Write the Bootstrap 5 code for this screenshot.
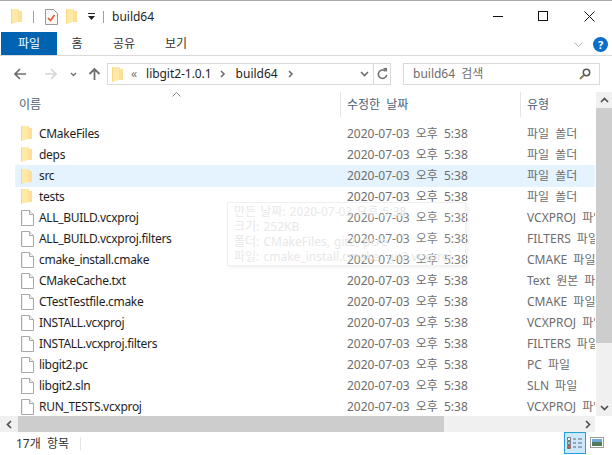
<!doctype html>
<html lang="ko">
  <head>
    <meta charset="UTF-8" />
    <title>build64</title>
    <link href="https://cdn.jsdelivr.net/npm/bootstrap@5.3.0/dist/css/bootstrap.min.css" rel="stylesheet" />
    <style>
      html, body { width: 612px; height: 455px; overflow: hidden; background: #fff; }
      body { font-family: "Noto Sans", "Noto Sans CJK KR", sans-serif; font-size: 12px; color: #1e1e1e; line-height: 1; word-spacing: 3px; }
      .win { position: relative; width: 612px; height: 455px; border-top: 1px solid #a9a9a9; }
      .title-bar { height: 31px; padding-left: 11px; }
      .ttl-folder { margin-left: 11px; }
      .ttl-sep { width: 1px; height: 12px; background: #a0a0a0; }
      .win-ctl { position: absolute; top: 10px; }
      .ribbon { height: 24px; border-bottom: 1px solid #dadada; padding-left: 1px; }
      .rb-tab { height: 23px; text-align: center; line-height: 23px; color: #333; }
      .rb-w56 { width: 56px; }
      .rb-w40 { width: 40px; }
      .rb-w54 { width: 54px; }
      .rb-w50 { width: 50px; }
      .rb-tab.on { background: #0063b1; color: #fff; }
      .rb-end { margin-left: auto; margin-top: 5px; padding-right: 4px; gap: 10px; }
      .help { width: 15px; height: 15px; border-radius: 50%; background: #0a6fc9; color: #fff; font-weight: 700; font-size: 11px; line-height: 15px; text-align: center; }
      .addr-row { height: 36px; padding: 7px 12px 0 0; }
      .nav-btns { width: 107px; padding-left: 14px; }
      .nav-fwd { margin-left: 17px; }
      .nav-drop { margin-left: 13px; }
      .nav-up { margin-left: 11px; }
      .addr { width: 284px; height: 22px; border: 1px solid #d9d9d9; padding-left: 4px; }
      .crumb-1 { margin-left: 9px; letter-spacing: -.05px; }
      .crumb-2 { margin: 0 10px 0 10px; }
      .refresh { width: 17px; height: 20px; border-left: 1px solid #d9d9d9; }
      .search { width: 197px; height: 22px; margin-left: 12px; border: 1px solid #d9d9d9; padding: 0 8px 0 9px; color: #6d6d6d; }
      .main { height: 324px; }
      .list-pane { width: 596px; height: 324px; overflow: hidden; position: relative; }
      .head { height: 25px; position: relative; color: #4c607a; }
      .h-name { width: 340px; padding-left: 19px; }
      .h-date { width: 180px; padding-left: 6px; border-left: 1px solid #e5e5e5; height: 25px; line-height: 25px; }
      .h-type { padding-left: 6px; border-left: 1px solid #e5e5e5; height: 25px; line-height: 25px; }
      .sort-up { position: absolute; left: 172px; top: 0; }
      .rows { padding-top: 6px; }
      .f-row { height: 21px; margin-left: 15px; width: 580px; overflow: hidden; white-space: nowrap; }
      .f-row.sel { background: #e5f3ff; height: 22px; margin-bottom: -1px; }
      .c-name { width: 325px; padding-left: 6px; }
      .c-icon { width: 18px; flex: none; }
      .c-label { letter-spacing: -.3px; }
      .c-date { width: 180px; padding-left: 7px; color: #6d6d6d; }
      .c-type { width: 75px; padding-left: 7px; color: #6d6d6d; overflow: hidden; }
      .tip { position: absolute; left: 227px; top: 110px; width: 239px; height: 64px; padding: 1px 6px; background: rgba(255,255,255,.12); border: 1px solid #efefef; box-shadow: 2px 2px 3px rgba(0,0,0,.05); color: #e8e8e8; line-height: 15px; white-space: nowrap; overflow: hidden; word-spacing: 1px; }
      .vbar { width: 16px; height: 324px; background: #f0f0f0; }
      .sb-btn { height: 16px; }
      .vthumb { height: 235px; background: #cdcdcd; }
      .hbar { height: 16px; width: 595px; background: #f0f0f0; }
      .hbar-arrow { width: 18px; }
      .hthumb { width: 426px; height: 16px; background: #cdcdcd; }
      .status { height: 23px; padding-left: 16px; position: relative; color: #333; }
      .st-sep { width: 1px; height: 13px; background: #e5e5e5; margin-left: 11px; }
      .view-a { position: absolute; left: 564px; top: 0; width: 22px; height: 22px; background: #cce8ff; border: 1px solid #26a0da; }
      .view-b { position: absolute; left: 590px; top: 5px; }
    </style>
  </head>
  <body>
    <svg width="0" height="0" class="position-absolute">
      <defs>
        <symbol id="folder" viewBox="0 0 11 15">
          <path d="M0 0h7l1 2h3v11H8z" fill="#f3cf6c" />
          <path d="M0 0h7v13l-7 2z" fill="#ffe9a6" />
          <path d="M0 0v15" stroke="#f0c95e" />
          <path d="M7 2h4v11H7z" fill="#fce09a" />
        </symbol>
        <symbol id="file" viewBox="0 0 13 16">
          <path d="M.5.5h8l4 4v11H.5z" fill="#fff" stroke="#a8a8a8" />
          <path d="M8.500.5v4h4" fill="#f2f2f2" stroke="#a8a8a8" />
          <path d="M1.500 1.500v13" stroke="#ececec" />
        </symbol>
        <symbol id="chev-r" viewBox="0 0 6 8">
          <path d="M1 1l3 3-3 3" fill="none" stroke="#6d6d6d" stroke-width="1.6" />
        </symbol>
      </defs>
    </svg>

    <div class="win d-flex flex-column">
      <div class="title-bar d-flex align-items-center">
        <svg width="11" height="15"><use href="#folder" /></svg>
        <span class="ttl-sep ttl-folder"></span>
        <svg class="ttl-folder" width="13" height="16" viewBox="0 0 13 16">
          <path d="M.5.5h8l4 4v11H.5z" fill="#f7f7f7" stroke="#9a9a9a" />
          <path d="M3 9l2.500 2.500L9.500 6" fill="none" stroke="#e2582a" stroke-width="1.6" />
        </svg>
        <svg class="ms-2" width="11" height="15"><use href="#folder" /></svg>
        <svg class="ttl-folder" width="7" height="8" viewBox="0 0 7 8">
          <path d="M0 .5h7" stroke="#222" />
          <path d="M0 3h7L3.500 7z" fill="#222" />
        </svg>
        <span class="ttl-sep ms-2"></span>
        <span class="ms-2">build64</span>
      </div>
      <svg class="win-ctl" style="left: 493px" width="11" height="11"><path d="M0 5.500h10" stroke="#111" /></svg>
      <svg class="win-ctl" style="left: 538px" width="11" height="11"><rect x=".5" y=".5" width="9" height="9" fill="none" stroke="#111" /></svg>
      <svg class="win-ctl" style="left: 584px" width="11" height="11"><path d="M.5.5l10 10M10.500.5l-10 10" stroke="#111" /></svg>

      <div class="ribbon d-flex align-items-start">
        <div class="rb-tab rb-w56 on">파일</div>
        <div class="rb-tab rb-w40">홈</div>
        <div class="rb-tab rb-w54">공유</div>
        <div class="rb-tab rb-w50">보기</div>
        <div class="rb-end d-flex align-items-center">
          <svg width="9" height="6" viewBox="0 0 9 6"><path d="M.5.500l4 4 4-4" fill="none" stroke="#b5b5b5" /></svg>
          <span class="help">?</span>
        </div>
      </div>

      <div class="addr-row d-flex align-items-start">
        <div class="nav-btns d-flex align-items-center">
          <svg width="13" height="22" viewBox="0 0 13 22"><path d="M12 11H2M6 6l-5 5 5 5" fill="none" stroke="#6d6d6d" stroke-width="1.7" /></svg>
          <svg class="nav-fwd" width="13" height="22" viewBox="0 0 13 22"><path d="M1 11h10M7 6l5 5-5 5" fill="none" stroke="#d6d6d6" stroke-width="1.7" /></svg>
          <svg class="nav-drop" width="7" height="22" viewBox="0 0 7 22"><path d="M1 10l2.500 2.500L6 10" fill="none" stroke="#6d6d6d" stroke-width="1.3" /></svg>
          <svg class="nav-up" width="13" height="22" viewBox="0 0 13 22"><path d="M6.500 17V6M1.500 11l5-5 5 5" fill="none" stroke="#6d6d6d" stroke-width="1.8" /></svg>
        </div>
        <div class="addr d-flex align-items-center">
          <svg width="11" height="15"><use href="#folder" /></svg>
          <span class="ms-2 text-secondary">«</span>
          <span class="crumb-1">libgit2-1.0.1</span>
          <svg class="ms-2" width="6" height="8"><use href="#chev-r" /></svg>
          <span class="crumb-2">build64</span>
          <svg width="6" height="8"><use href="#chev-r" /></svg>
          <svg class="ms-auto me-1" width="9" height="6" viewBox="0 0 9 6"><path d="M1 1l3.500 3.500L8 1" fill="none" stroke="#6d6d6d" stroke-width="1.6" /></svg>
          <div class="refresh d-flex align-items-center justify-content-center">
            <svg width="11" height="12" viewBox="0 0 11 12"><path d="M8.500 3.200A4.200 4.200 0 1 0 9.700 7" fill="none" stroke="#6d6d6d" stroke-width="1.5" /><path d="M6 0l4 0v4z" fill="#6d6d6d" /></svg>
          </div>
        </div>
        <div class="search d-flex align-items-center justify-content-between">
          <span>build64 검색</span>
          <svg width="12" height="12" viewBox="0 0 12 12"><circle cx="7.500" cy="4.500" r="3.200" fill="none" stroke="#555" stroke-width="1.500" /><path d="M5 7l-4 4" stroke="#8a7a55" stroke-width="2" /></svg>
        </div>
      </div>

      <div class="main d-flex">
        <div class="list-pane">
          <div class="head d-flex align-items-center">
            <svg class="sort-up" width="9" height="6" viewBox="0 0 9 6"><path d="M.5 4.500l4-4 4 4" fill="none" stroke="#8a8a8a" /></svg>
            <div class="h-name">이름</div>
            <div class="h-date">수정한 날짜</div>
            <div class="h-type">유형</div>
          </div>
          <div class="rows" id="rows"></div>
          <div class="tip">
            <div>만든 날짜: 2020-07-03 오후 5:38</div>
            <div>크기: 252KB</div>
            <div>폴더: CMakeFiles, git2, pcre</div>
            <div>파일: cmake_install.cmake, git2.vcxproj</div>
          </div>
        </div>
        <div class="vbar d-flex flex-column">
          <div class="sb-btn d-flex align-items-center justify-content-center">
            <svg width="9" height="6" viewBox="0 0 9 6"><path d="M1 5l3.500-3.500L8 5" fill="none" stroke="#505050" stroke-width="1.700" /></svg>
          </div>
          <div class="vthumb"></div>
          <div class="sb-btn d-flex align-items-center justify-content-center mt-auto">
            <svg width="9" height="6" viewBox="0 0 9 6"><path d="M1 1l3.500 3.500L8 1" fill="none" stroke="#505050" stroke-width="1.700" /></svg>
          </div>
        </div>
      </div>

      <div class="hbar d-flex align-items-center">
        <div class="hbar-arrow d-flex justify-content-center">
          <svg width="6" height="9" viewBox="0 0 6 9"><path d="M5 1L1.500 4.500 5 8" fill="none" stroke="#505050" stroke-width="1.700" /></svg>
        </div>
        <div class="hthumb"></div>
        <svg class="ms-auto me-1" width="6" height="9" viewBox="0 0 6 9"><path d="M1 1l3.500 3.500L1 8" fill="none" stroke="#505050" stroke-width="1.700" /></svg>
      </div>

      <div class="status d-flex align-items-center">
        <span>17개 항목</span>
        <span class="st-sep"></span>
        <div class="view-a d-flex align-items-center justify-content-center">
          <svg width="16" height="13" viewBox="0 0 16 13">
            <path d="M.5.500h3v3h-3z" fill="#fff" stroke="#777" />
            <path d="M.5 4.500h3v3h-3z" fill="#9cc4e8" stroke="#777" />
            <path d="M.5 8.500h3v3h-3z" fill="#d9534f" stroke="#777" />
            <path d="M6 2h3M11 2h4M6 6h3M11 6h4M6 10h3M11 10h4" stroke="#666" />
          </svg>
        </div>
        <svg class="view-b" width="14" height="11" viewBox="0 0 14 11">
          <rect x=".5" y=".5" width="13" height="10" fill="#fff" stroke="#9a9a9a" />
          <rect x="2" y="2" width="10" height="3" fill="#6fa8dc" />
          <rect x="2" y="5" width="10" height="4" fill="#4f7a5a" />
        </svg>
      </div>
    </div>

    <script>
      // file list rows
      var items = [
        ["CMakeFiles", "파일 폴더", "folder"],
        ["deps", "파일 폴더", "folder"],
        ["src", "파일 폴더", "folder"],
        ["tests", "파일 폴더", "folder"],
        ["ALL_BUILD.vcxproj", "VCXPROJ 파일", "file"],
        ["ALL_BUILD.vcxproj.filters", "FILTERS 파일", "file"],
        ["cmake_install.cmake", "CMAKE 파일", "file"],
        ["CMakeCache.txt", "Text 원본 파일", "file"],
        ["CTestTestfile.cmake", "CMAKE 파일", "file"],
        ["INSTALL.vcxproj", "VCXPROJ 파일", "file"],
        ["INSTALL.vcxproj.filters", "FILTERS 파일", "file"],
        ["libgit2.pc", "PC 파일", "file"],
        ["libgit2.sln", "SLN 파일", "file"],
        ["RUN_TESTS.vcxproj", "VCXPROJ 파일", "file"]
      ];
      document.getElementById("rows").innerHTML = items.map(function (it, i) {
        var icon = it[2] === "folder"
          ? '<svg width="11" height="15"><use href="#folder" /></svg>'
          : '<svg width="13" height="16"><use href="#file" /></svg>';
        return '<div class="f-row d-flex align-items-center' + (i === 2 ? " sel" : "") + '">' +
          '<div class="c-name d-flex align-items-center"><span class="c-icon d-flex">' + icon + '</span><span class="c-label">' + it[0] + "</span></div>" +
          '<div class="c-date">2020-07-03 오후 5:38</div>' +
          '<div class="c-type">' + it[1] + "</div></div>";
      }).join("");
    </script>
    <script src="https://cdn.jsdelivr.net/npm/bootstrap@5.3.0/dist/js/bootstrap.bundle.min.js"></script>
  </body>
</html>
